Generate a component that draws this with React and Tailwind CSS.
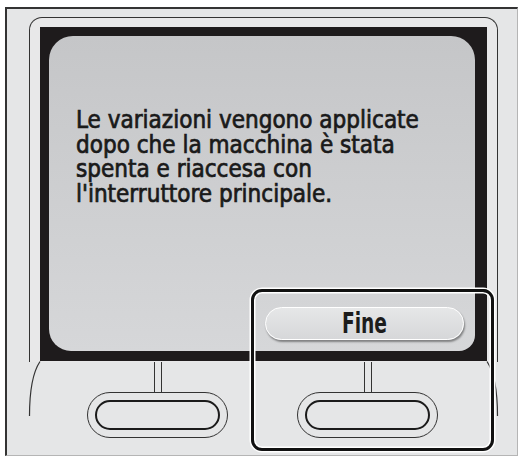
import React from "react";

const panelFont = { fontFamily: "'DejaVu Sans Condensed', 'DejaVu Sans', sans-serif" };

const HardKey = () => (
    <div className="flex flex-col items-center">
        <div className="w-[8px] h-[30px] border-x border-[#333]" />
        <div className="w-[141px] h-[46px] rounded-full border border-[#333] flex items-center justify-center">
            <div className="w-[125px] h-[30px] rounded-full border-2 border-[#1b1b1b]" />
        </div>
    </div>
);

const App = () => {
    return (
        <div className="relative w-[520px] h-[456px] bg-white overflow-hidden">
            <div className="absolute left-[5px] top-[7px] w-[513px] h-[449px] border-t-2 border-l-2 border-[#333] border-r border-b border-r-[#b5b5b5] border-b-[#b5b5b5] bg-[#e5e6e7]">
                {/* bezel */}
                <div className="ml-[22px] mt-[8px] w-[469px] h-[345px] border-t border-x border-[#333] rounded-t-[13px] bg-[#e8e8e9]">
                    <div className="ml-[10px] mt-[9px] w-[447px] h-[334px] bg-[#1e1b1c] pl-[9px] pr-[12px] pt-[9px] pb-[10px]">
                        <div className="h-full rounded-tl-[24px] rounded-tr-[24px] rounded-bl-[22px] rounded-br-[16px] bg-gradient-to-b from-[#c5c6c8] to-[#d6d7d9] flex flex-col">
                            <p
                                className="pl-[27px] pt-[72px] text-[24px] leading-[24.7px] text-[#1a1a1a] font-stretch-condensed [-webkit-text-stroke:0.7px_#1a1a1a]"
                                style={panelFont}
                            >
                                Le variazioni vengono applicate<br />
                                dopo che la macchina è stata<br />
                                spenta e riaccesa con<br />
                                l'interruttore principale.
                            </p>
                            <div className="mt-auto self-end mr-[11px] mb-[11px] w-[199px] h-[33px] rounded-full border-[1.5px] border-white bg-gradient-to-b from-[#e6e7e8] to-[#d6d7d9] shadow-[1px_2px_2px_rgba(0,0,0,0.4)] flex items-center justify-center">
                                <span
                                    className="inline-block scale-x-[0.74] text-[28px] leading-none font-bold text-[#1c1c1c] font-stretch-condensed"
                                    style={panelFont}
                                >
                                    Fine
                                </span>
                            </div>
                        </div>
                    </div>
                </div>
                {/* hard keys */}
                <div className="flex ml-[80px] gap-[69px]">
                    <HardKey />
                    <HardKey />
                </div>
            </div>

            <svg className="absolute inset-0 pointer-events-none" width="520" height="456">
                <path d="M40 361.5 C33 372 29.5 390 29.5 416" fill="none" stroke="#333" strokeWidth="1.2" />
                <path d="M487 361.5 C494 372 497.5 390 497.5 416" fill="none" stroke="#333" strokeWidth="1.2" />
            </svg>

            {/* selection frame */}
            <div className="absolute left-[251px] top-[289px] w-[243px] h-[162px] rounded-[11px] border-[3.5px] border-[#111] shadow-[inset_0_0_0_1.5px_#fff,0_0_0_1.5px_#fff]" />
        </div>
    );
};

export default App;
